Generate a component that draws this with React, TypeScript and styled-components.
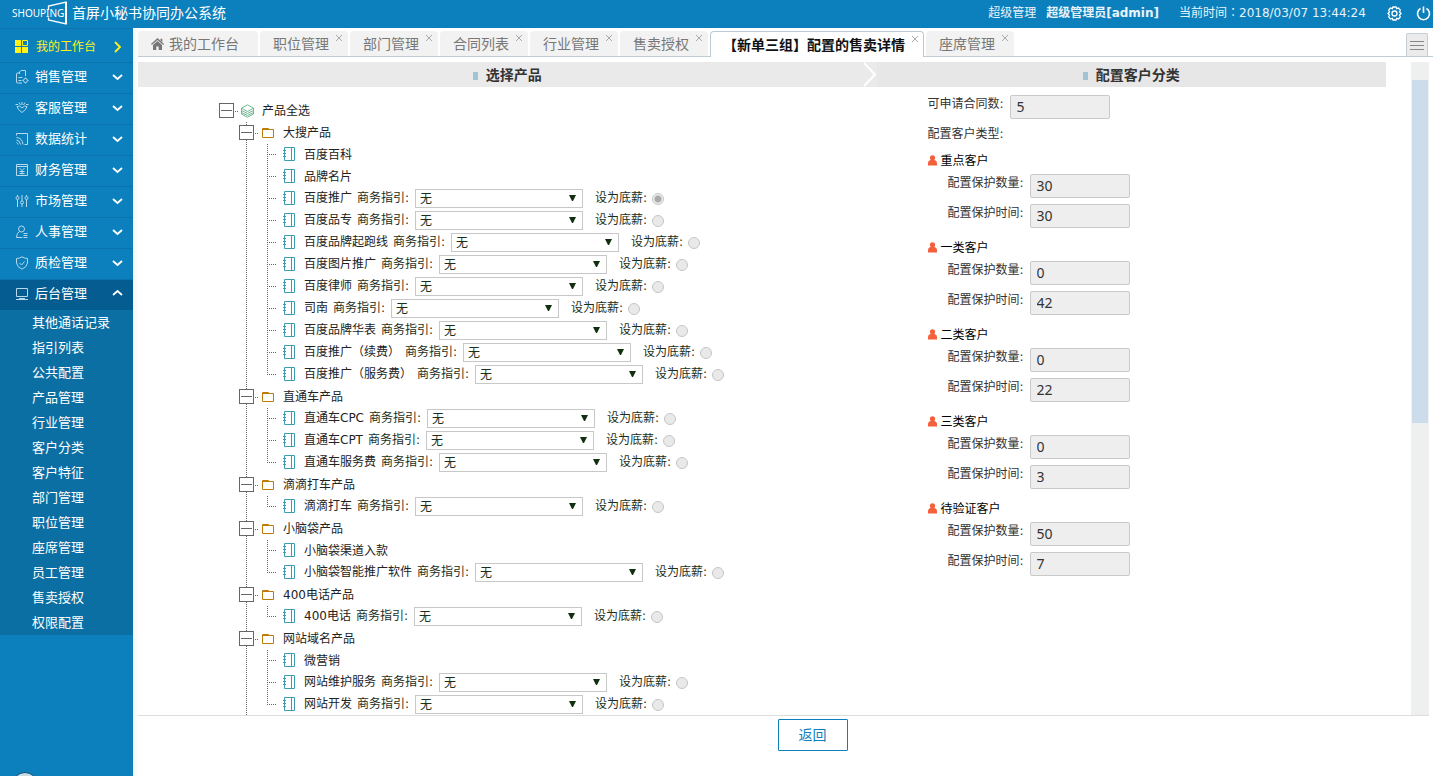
import React from 'react';
import styled, { createGlobalStyle, css } from 'styled-components';

const GlobalStyle = createGlobalStyle`
  * { box-sizing: border-box; }
  body {
    margin: 0;
    background: #fff;
    color: #222;
    font: 12px/20px "DejaVu Sans", "Noto Sans CJK SC", sans-serif;
  }
  ul { list-style: none; margin: 0; padding: 0; }
  a { color: inherit; text-decoration: none; }
  button { font: inherit; color: inherit; background: none; border: 0; padding: 0; cursor: pointer; }
  svg { display: block; flex: none; }
`;

const blue = '#0c80bd';

const Page = styled.div`
  display: flex;
  flex-direction: column;
  height: 100vh;
  overflow: hidden;
`;

const TopBar = styled.header`
  display: flex;
  align-items: center;
  flex: none;
  height: 28px;
  padding: 0 2px 2px 12px;
  background: ${blue};
  color: #fff;
`;

const Title = styled.h1`
  flex: 1;
  margin: 0 0 0 5px;
  font-size: 14px;
  font-weight: 400;
`;

const Role = styled.span`
  margin-right: 10px;
  color: #e8f3fa;
`;

const UserName = styled.strong`
  margin-right: 20px;
  color: #e8f3fa;
`;

const Clock = styled.time`
  min-width: 194px;
  margin-right: 14px;
  font-family: "DejaVu Sans", "Noto Sans CJK TC", sans-serif;
  color: #e8f3fa;
`;

const TopButton = styled.button`
  margin-right: 14px;
  &:last-child { margin-right: 0; }
`;

const Body = styled.div`
  display: flex;
  flex: 1;
  min-height: 0;
`;

const Sidebar = styled.nav`
  position: relative;
  flex: none;
  width: 133px;
  background: ${blue};
  color: #fff;
  overflow: hidden;
  font-size: 13px;
`;

const MenuLink = styled.a<{ $home?: boolean; $open?: boolean }>`
  display: flex;
  align-items: center;
  gap: 6px;
  height: 31px;
  padding: 0 10px 2px 15px;
  border-top: 1px solid #0b73ab;
  background: ${(p) => (p.$open ? '#045c90' : 'transparent')};
  ${(p) =>
    p.$home &&
    css`
      height: 34px;
      padding-top: 4px;
      font-size: 12px;
      color: #fff11a;
    `}
  span { flex: 1; }
`;

const SubMenu = styled.ul`
  background: #0c6fa3;
  li { height: 25px; }
  a { display: block; padding-left: 32px; line-height: 25px; }
`;

const Bubble = styled.span`
  position: absolute;
  left: 12px;
  bottom: -22px;
  width: 26px;
  height: 26px;
  border: 1px solid #0a4f78;
  border-radius: 50%;
  background: #c9dbe6;
`;

const Main = styled.main`
  display: flex;
  flex: 1;
  flex-direction: column;
  min-width: 0;
  padding-left: 5px;
  background: linear-gradient(to right, #f4f4f4, #fff 5px);
`;

const TabStrip = styled.div`
  display: flex;
  gap: 2px;
  flex: none;
  height: 29px;
  padding: 3px 5px 0 0;
  border-bottom: 1px solid #c1cdd5;
  font-size: 14px;
`;

const Tab = styled.div<{ $active?: boolean; $home?: boolean }>`
  display: flex;
  align-items: center;
  height: ${(p) => (p.$active ? 26 : 25)}px;
  padding: 0 ${(p) => (p.$home ? 19 : p.$active ? 4 : 5)}px 0 ${(p) => (p.$active ? 12 : 13)}px;
  border: 1px solid ${(p) => (p.$active ? '#b9c9d5' : '#f0f0f0')};
  border-width: ${(p) => (p.$active ? '1px 1px 0' : '0')};
  border-radius: 4px 4px 0 0;
  background: ${(p) => (p.$active ? '#fff' : '#f2f2f2')};
  color: ${(p) => (p.$active ? '#111' : '#777')};
  font-weight: ${(p) => (p.$active ? 700 : 400)};
  white-space: nowrap;
  a { display: flex; align-items: center; gap: 5px; }
`;

const Close = styled.button`
  align-self: flex-start;
  margin: 3px 0 0 6px;
`;

const TabMenu = styled.button`
  display: flex;
  align-items: center;
  justify-content: center;
  width: 22px;
  height: 23px;
  margin: 2px 0 0 auto;
  border: 1px solid #c6ced4;
  border-bottom: 0;
  border-radius: 2px 2px 0 0;
  background: #ebebeb;
`;

const Viewport = styled.div`
  display: flex;
  flex: 1;
  min-height: 0;
  margin: 5px 4px 0 0;
`;

const Columns = styled.div`
  display: grid;
  grid-template-columns: 29fr 20fr;
  grid-template-rows: 25px 1fr;
  flex: 1;
  min-width: 0;
  overflow: hidden;
`;

const StepTitle = styled.h2<{ $next?: boolean }>`
  display: flex;
  align-items: center;
  margin: 0;
  background: ${(p) => (p.$next ? '#eaeaea' : '#e7e7e7')};
  font-size: 14px;
  color: #333;
  span { flex: 1; text-align: center; }
  span::before {
    content: '';
    display: inline-block;
    width: 5px;
    height: 8px;
    margin-right: 8px;
    background: #a1c4d5;
  }
  svg { margin-left: -13px; }
`;

const Track = styled.div`
  flex: none;
  width: 18px;
  margin-left: 25px;
  padding: 18px 1px 0;
  background: #edf0ef;
`;

const Thumb = styled.div`
  height: 54%;
  background: #ccdceb;
`;

const Tree = styled.div`
  padding: 13px 0 0 81px;
  white-space: nowrap;
`;

const Node = styled.div`
  display: flex;
  align-items: center;
  height: 22px;
`;

const Toggle = styled.button`
  display: flex;
  align-items: center;
  width: 15px;
  height: 15px;
  margin-bottom: 1px;
  padding: 0 1px;
  border: 1px solid #666;
  background: #fff;
  &::before { content: ''; flex: 1; height: 1px; background: #666; }
`;

const Dots = styled.i<{ $wide?: boolean }>`
  width: ${(p) => (p.$wide ? 8 : 7)}px;
  height: 1px;
  background: repeating-linear-gradient(to right, transparent 0 1px, #666 1px 2px) 0 0 / 5px 1px no-repeat;
`;

const NodeText = styled.span<{ $gap: number }>`
  margin-left: ${(p) => p.$gap}px;
`;

const Paren = styled.span`
  font-family: "Noto Sans CJK TC", sans-serif;
`;

const Groups = styled.ul`
  margin-left: 20px;
  background: repeating-linear-gradient(to bottom, #666 0 1px, transparent 1px 2px) 7px 0 / 1px 100% no-repeat;
`;

const Leaf = styled.li<{ $config?: boolean }>`
  display: flex;
  align-items: center;
  height: 22px;
  padding: 0 0 ${(p) => (p.$config ? 1 : 0)}px 44px;
  line-height: ${(p) => (p.$config ? 18 : 20)}px;
  background:
    repeating-linear-gradient(to bottom, #666 0 1px, transparent 1px 2px) 28px 0 / 1px 100% no-repeat,
    repeating-linear-gradient(to right, #666 0 1px, transparent 1px 2px) 28px 10px / 9px 1px no-repeat;
  &:last-child {
    background-size: 1px 11px, 9px 1px;
  }
  > svg { margin-bottom: 2px; }
  ${NodeText}, label { padding-bottom: ${(p) => (p.$config ? 2 : 0)}px; }
`;

const Config = styled.div`
  display: flex;
  align-items: center;
  margin-left: 5px;
  color: #1a2e1a;
`;

const SelectBox = styled.span`
  position: relative;
  margin: 0 12px 0 6px;
  svg { position: absolute; right: 7px; top: 6px; pointer-events: none; }
`;

const Select = styled.select`
  display: block;
  width: 168px;
  height: 19px;
  padding: 2px 4px 0;
  appearance: none;
  border: 1px solid #c8c8c8;
  border-radius: 0;
  background: #fff;
  color: #1a2e1a;
  font: inherit;
  line-height: 15px;
`;

const Radio = styled.input`
  width: 12px;
  height: 12px;
  margin: 0 0 0 5px;
  appearance: none;
  border: 1px solid #c6c6c6;
  border-radius: 50%;
  background: #e9e9e9;
  &:checked { background: radial-gradient(circle, #aaa 0 3px, #ececec 4px); }
`;

const Form = styled.form`
  padding: 8px 0 0 51px;
`;

const Field = styled.div<{ $nested?: boolean }>`
  display: flex;
  align-items: flex-start;
  height: 30px;
  padding-left: ${(p) => (p.$nested ? 20 : 0)}px;
  label { width: 82px; line-height: 18px; color: #333; }
  input {
    width: 100px;
    height: 24px;
    padding: 0 6px 2px;
    border: 1px solid #c9c9c9;
    border-radius: 2px;
    background: #eee;
    color: #333;
    font: 14px "Noto Sans", sans-serif;
  }
`;

const TypeLabel = styled.p`
  margin: 0;
  height: 22px;
  line-height: 18px;
  color: #333;
`;

const Customer = styled.fieldset`
  margin: 0;
  padding: 0;
  border: 0;
`;

const CustomerName = styled.legend`
  display: flex;
  align-items: center;
  gap: 4px;
  height: 27px;
  padding: 0;
  color: #000;
`;

const Footer = styled.footer`
  flex: none;
  height: 61px;
  margin-right: 4px;
  padding: 3px 0 0 58px;
  border-top: 1px solid #ddd;
  text-align: center;
`;

const BackButton = styled.button`
  width: 70px;
  height: 32px;
  border: 1px solid ${blue};
  border-radius: 1px;
  background: #fff;
  color: ${blue};
  font-size: 14px;
`;

const menuIcons: Record<string, React.ReactNode> = {
  sales: (
    <>
      <path d="M4 3H2.500Q1.500 3 1.500 4V12Q1.500 13 2.500 13H7" />
      <path d="M3.500 7.500H7.500M3.500 10.500H6.500M4.500 4V2L6 .500H10.500V6" />
      <circle cx="10.500" cy="10.500" r="2" />
      <path d="M10.500 7.500v1M10.500 12.500v1M7.500 10.500h1M12.500 10.500h1" />
    </>
  ),
  service: (
    <>
      <path d="M.500 3.500L3 3.500M11 3.500H13.500M2 5.500L3.500 8.500L7 11.500L10.500 8.500L12 5.500L9.500 5L7 7L4.500 5L2 5.500" />
      <path d="M7 1V4M4 1.500L5.500 4M10 1.500L8.500 4" />
    </>
  ),
  stats: (
    <>
      <path d="M1.500 3.500V1.500H12.500V12.500H9.500" />
      <path d="M1.500 5.500Q7.500 6 8 12.500M1.500 8Q5 8.500 5.500 12.500M1.500 10.500Q3 11 3 12.500" />
    </>
  ),
  finance: (
    <>
      <path d="M1.500 1.500H12.500V12.500H1.500ZM1.500 3.500H12.500" />
      <path d="M4.500 5L7 7.500L9.500 5M7 7.500V11.500M4.500 8.500H9.500M4.500 10.500H9.500" />
    </>
  ),
  market: (
    <>
      <path d="M2.500 1V2.500M2.500 5.500V13M7 1V7M7 10V13M11.500 1V2.500M11.500 5.500V13" />
      <circle cx="2.500" cy="4" r="1.500" /><circle cx="7" cy="8.500" r="1.500" /><circle cx="11.500" cy="4" r="1.500" />
    </>
  ),
  staff: (
    <>
      <circle cx="6.500" cy="4" r="3" />
      <path d="M4.500 6.500Q1.500 8 1.500 12.500H7.500M8.500 8.500H12.500M8.500 10.500H12.500M8.500 12.500H12.500" />
    </>
  ),
  quality: (
    <>
      <path d="M7 .800Q9.500 2.500 12.500 2.500V7Q12 11 7 13.200Q2 11 1.500 7V2.500Q4.500 2.500 7 .800Z" />
      <path d="M4.500 7L6.500 9L9.500 5.500" />
    </>
  ),
  admin: <path d="M1.500 1.500H12.500V9.500H1.500ZM1 12.500H13M4 11.500H10" />,
};

const MenuIcon = ({ name }: { name: string }) => (
  <svg width="14" height="14" viewBox="0 0 14 14" fill="none" stroke="#b6d9ec" strokeWidth="1">
    {menuIcons[name]}
  </svg>
);

const Chevron = ({ d, color = '#fff' }: { d: string; color?: string }) => (
  <svg width="11" height="12" viewBox="0 0 11 12" fill="none" stroke={color} strokeWidth="1.800"><path d={d} /></svg>
);

const BookIcon = () => (
  <svg width="12" height="14" viewBox="0 0 12 14" fill="none" stroke="#3f9bb0">
    <path d="M1.500 .500H11.500V13.500H1.500ZM8.500 .500V13.500M0 3.500H3M0 6.500H3M0 9.500H3" />
  </svg>
);

const FolderIcon = () => (
  <svg width="12" height="12" viewBox="0 0 12 12" fill="none" stroke="#c07a08">
    <path d="M.500 10.500V1.500H6.500V2.500H11.500V10.500Z" /><path d="M1 2.500H7" />
  </svg>
);

const LayersIcon = () => (
  <svg width="13" height="14" viewBox="0 0 13 14" fill="none" stroke="#6fb892">
    <path d="M6.500 .800L12.500 4.200L6.500 7.500L.500 4.200ZM.500 6.500L6.500 9.500L12.500 6.500M.500 8.500L6.500 11.500L12.500 8.500M.500 10L6.500 13.300L12.500 10M.500 4V10M12.500 4V10" />
  </svg>
);

const UserIcon = () => (
  <svg width="9" height="11" viewBox="0 0 9 11" fill="#f4603c">
    <circle cx="4.500" cy="2.800" r="2.600" /><path d="M0 10.500V8Q0 5.500 2.500 5H6.500Q9 5.500 9 8V10.500Z" />
  </svg>
);

const menu = [
  ['sales', '销售管理'], ['service', '客服管理'], ['stats', '数据统计'], ['finance', '财务管理'],
  ['market', '市场管理'], ['staff', '人事管理'], ['quality', '质检管理'],
];
const subMenu = ['其他通话记录', '指引列表', '公共配置', '产品管理', '行业管理', '客户分类', '客户特征', '部门管理', '职位管理', '座席管理', '员工管理', '售卖授权', '权限配置'];
const tabs = ['职位管理', '部门管理', '合同列表', '行业管理', '售卖授权', '【新单三组】配置的售卖详情', '座席管理'];
const activeTab = '【新单三组】配置的售卖详情';

type Product = { name: string; plain?: boolean; base?: boolean };
const groups: { name: string; products: Product[] }[] = [
  {
    name: '大搜产品',
    products: [
      { name: '百度百科', plain: true }, { name: '品牌名片', plain: true },
      { name: '百度推广', base: true }, { name: '百度品专' }, { name: '百度品牌起跑线' },
      { name: '百度图片推广' }, { name: '百度律师' }, { name: '司南' }, { name: '百度品牌华表' },
      { name: '百度推广（续费）' }, { name: '百度推广（服务费）' },
    ],
  },
  { name: '直通车产品', products: [{ name: '直通车CPC' }, { name: '直通车CPT' }, { name: '直通车服务费' }] },
  { name: '滴滴打车产品', products: [{ name: '滴滴打车' }] },
  { name: '小脑袋产品', products: [{ name: '小脑袋渠道入款', plain: true }, { name: '小脑袋智能推广软件' }] },
  { name: '400电话产品', products: [{ name: '400电话' }] },
  { name: '网站域名产品', products: [{ name: '微营销', plain: true }, { name: '网站维护服务' }, { name: '网站开发' }] },
];

const customers: [string, string, string][] = [
  ['重点客户', '30', '30'], ['一类客户', '0', '42'], ['二类客户', '0', '22'], ['三类客户', '0', '3'], ['待验证客户', '50', '7'],
];

// Full-width parentheses are set in a face that centres them in their cell.
const productLabel = (name: string) =>
  name.split(/([（）])/).map((part, i) => (i % 2 ? <Paren key={i}>{part}</Paren> : part));

const ProductRow = ({ product }: { product: Product }) => (
  <Leaf $config={!product.plain}>
    <BookIcon />
    <NodeText $gap={9}>{productLabel(product.name)}</NodeText>
    {!product.plain && (
      <Config>
        <label htmlFor={`guide-${product.name}`}>商务指引:</label>
        <SelectBox>
          <Select id={`guide-${product.name}`}><option>无</option></Select>
          <svg width="7" height="6" viewBox="0 0 7 6" fill="#12300f"><path d="M0 0H7L4 6H3Z" /></svg>
        </SelectBox>
        <label htmlFor={`base-${product.name}`}>设为底薪:</label>
        <Radio type="radio" name="base" id={`base-${product.name}`} defaultChecked={product.base} disabled />
      </Config>
    )}
  </Leaf>
);

export default function App() {
  return (
    <Page>
      <GlobalStyle />
      <TopBar>
        <svg width="55" height="26" viewBox="0 0 55 26" fill="none" stroke="#fff">
          <text x="0" y="17" fontSize="10" fontFamily="Noto Sans, sans-serif" fill="#fff" stroke="none">SHOUPING</text>
          <path d="M36.500 10V6L54 2V24L36.500 20V17.500" strokeWidth="1.300" />
          <path d="M54 2V24" strokeWidth="2" />
        </svg>
        <Title>首屏小秘书协同办公系统</Title>
        <Role>超级管理</Role>
        <UserName>超级管理员[admin]</UserName>
        <Clock>当前时间：2018/03/07 13:44:24</Clock>
        <TopButton aria-label="设置">
          <svg width="15" height="15" viewBox="0 0 15 15" fill="none" stroke="#fff" strokeWidth="1.300">
            <path d="M6 1H9L9.700 2.600L11.500 2L13.300 4.200L12.500 5.800L14 7.500L12.500 9.200L13.300 10.800L11.500 13L9.700 12.400L9 14H6L5.300 12.400L3.500 13L1.700 10.800L2.500 9.200L1 7.500L2.500 5.800L1.700 4.200L3.500 2L5.300 2.600Z" />
            <circle cx="7.500" cy="7.500" r="2.500" />
          </svg>
        </TopButton>
        <TopButton aria-label="退出">
          <svg width="15" height="15" viewBox="0 0 15 15" fill="none" stroke="#fff" strokeWidth="1.600">
            <path d="M4.500 2.500A6 6 0 1 0 10.500 2.500M7.500 .500V7" />
          </svg>
        </TopButton>
      </TopBar>
      <Body>
        <Sidebar>
          <MenuLink href="#home" $home>
            <svg width="15" height="14" viewBox="0 0 15 14" fill="#fff11a">
              <path d="M0 0H6V6H0ZM0 7H6V13H0ZM7 7H13V13H7Z" /><path d="M7.500 .500H12.500V5.500H7.500Z" fill="none" stroke="#fff11a" />
            </svg>
            <span>我的工作台</span>
            <Chevron d="M3 1L8 6L3 11" color="#fff11a" />
          </MenuLink>
          {menu.map(([icon, label]) => (
            <MenuLink key={icon} href={`#${icon}`}>
              <MenuIcon name={icon} />
              <span>{label}</span>
              <Chevron d="M1 4L5.500 8L10 4" />
            </MenuLink>
          ))}
          <MenuLink href="#admin" $open>
            <MenuIcon name="admin" />
            <span>后台管理</span>
            <Chevron d="M1 7L5.500 3L10 7" />
          </MenuLink>
          <SubMenu>
            {subMenu.map((s) => <li key={s}><a href="#admin">{s}</a></li>)}
          </SubMenu>
          <Bubble />
        </Sidebar>
        <Main>
          <TabStrip>
            <Tab $home>
              <a href="#home">
                <svg width="13" height="12" viewBox="0 0 13 12" fill="#777">
                  <path d="M6.500 0L13 6L12.200 7L6.500 2L.800 7L0 6Z" /><path d="M9.500 .800H11.300V4L9.500 2.400Z" />
                  <path d="M2 7L6.500 3L11 7V12H7.700V8.500H5.300V12H2Z" />
                </svg>
                我的工作台
              </a>
            </Tab>
            {tabs.map((t) => (
              <Tab key={t} $active={t === activeTab}>
                <a href="#tab">{t}</a>
                <Close aria-label="关闭">
                  <svg width="8" height="8" viewBox="0 0 8 8" stroke="#aaa"><path d="M1 1L7 7M7 1L1 7" /></svg>
                </Close>
              </Tab>
            ))}
            <TabMenu aria-label="标签菜单">
              <svg width="14" height="11" viewBox="0 0 14 11" stroke="#888"><path d="M0 1.500H14M0 5.500H14M0 9.500H14" /></svg>
            </TabMenu>
          </TabStrip>
          <Viewport>
            <Columns>
              <StepTitle $next>
                <span>选择产品</span>
                <svg width="13" height="25" viewBox="0 0 13 25" fill="none" stroke="#fff" strokeWidth="2"><path d="M0 1L11 12.500L0 24" /></svg>
              </StepTitle>
              <StepTitle><span>配置客户分类</span></StepTitle>
              <Tree>
                <Node>
                  <Toggle aria-label="收起" /><Dots /><LayersIcon />
                  <NodeText $gap={8}>产品全选</NodeText>
                </Node>
                <Groups>
                  {groups.map((g) => (
                    <li key={g.name}>
                      <Node>
                        <Toggle aria-label="收起" /><Dots $wide /><FolderIcon />
                        <NodeText $gap={9}>{g.name}</NodeText>
                      </Node>
                      <ul>{g.products.map((p) => <ProductRow key={p.name} product={p} />)}</ul>
                    </li>
                  ))}
                </Groups>
              </Tree>
              <Form>
                <Field>
                  <label htmlFor="contracts">可申请合同数:</label>
                  <input id="contracts" defaultValue="5" readOnly />
                </Field>
                <TypeLabel>配置客户类型:</TypeLabel>
                {customers.map(([name, count, days], i) => (
                  <Customer key={name}>
                    <CustomerName><UserIcon />{name}</CustomerName>
                    <Field $nested>
                      <label htmlFor={`count-${i}`}>配置保护数量:</label>
                      <input id={`count-${i}`} defaultValue={count} readOnly />
                    </Field>
                    <Field $nested>
                      <label htmlFor={`days-${i}`}>配置保护时间:</label>
                      <input id={`days-${i}`} defaultValue={days} readOnly />
                    </Field>
                  </Customer>
                ))}
              </Form>
            </Columns>
            <Track><Thumb /></Track>
          </Viewport>
          <Footer><BackButton>返回</BackButton></Footer>
        </Main>
      </Body>
    </Page>
  );
}
